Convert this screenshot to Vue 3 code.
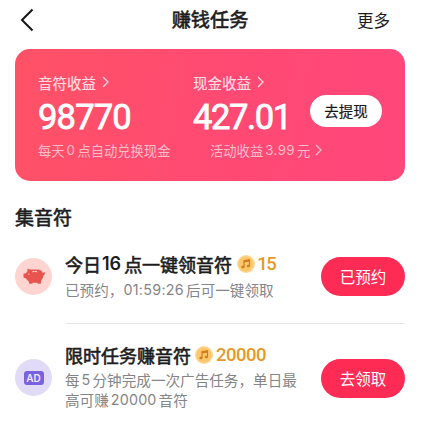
<script setup>
const balances = [
  { label: '音符收益', amount: '98770', kind: 'notes' },
  { label: '现金收益', amount: '427.01', kind: 'cash' },
]
const tasks = [
  { icon: 'pig', title: ['今日', '16', '点一键领音符'], reward: '15', lines: [['已预约，', '01:59:26', '后可一键领取']], action: '已预约' },
  { icon: 'ad', title: ['限时任务赚音符'], reward: '20000', lines: [['每', '5', '分钟完成一次广告任务，单日最'], ['高可赚', '20000', '音符']], action: '去领取' },
]
const isNumber = (s) => /^[\d:.]+$/.test(s)
</script>

<template>
  <main class="page">
    <header class="bar">
      <svg class="back" viewBox="0 0 14 24"><path d="M12.500 1.500 2 12l10.500 10.500" /></svg>
      <h1>赚钱任务</h1>
      <span class="more">更多</span>
    </header>

    <section class="wallet">
      <div v-for="b in balances" :key="b.kind" class="balance" :class="b.kind">
        <div class="label">{{ b.label }}<svg class="chev" viewBox="0 0 7 12"><path d="M1 1l5 5-5 5" /></svg></div>
        <div class="amount">{{ b.amount }}</div>
        <div v-if="b.kind === 'notes'" class="note">每天<span class="num">0</span>点自动兑换现金</div>
        <div v-else class="note">活动收益<span class="num">3.99</span>元<svg class="chev" viewBox="0 0 7 12"><path d="M1 1l5 5-5 5" /></svg></div>
      </div>
      <button class="withdraw">去提现</button>
    </section>

    <h2>集音符</h2>

    <section class="tasks">
      <article v-for="t in tasks" :key="t.icon" class="task" :class="t.icon">
        <div class="badge">
          <svg v-if="t.icon === 'pig'" class="piggy" viewBox="0 0 22 17">
            <path d="M4.600 .6 7 1.500H15Q18.800 2 19.600 4.800L21.800 4.300V6.300L20.400 7.500Q20 10.800 18.300 12.500L17.700 15.800H14.800L14.300 14.700H9.800L9.300 15.800H6.400L5.600 13.200Q4 12.200 3 10.600L.5 9.500V5.800L2.800 5.200 4.300 3.400Z" />
            <path class="slot" d="M9.200 3.800Q11.500 2.800 14.200 3.800" />
            <circle class="eye" cx="5.800" cy="6.300" r=".8" />
          </svg>
          <span v-else class="tag">AD</span>
        </div>
        <div class="info">
          <h3>
            <span v-for="(p, i) in t.title" :key="i" :class="{ num: isNumber(p) }">{{ p }}</span>
            <svg class="coin" viewBox="0 0 18 18">
              <circle cx="9" cy="9" r="9" fill="#ffd793" />
              <circle cx="9" cy="9" r="7.500" fill="#fbc66c" />
              <path d="M7 11.800V5.800L12.500 4.700V10.800M7 7L12.500 5.900" fill="none" stroke="#d07c18" stroke-width="1.200" />
              <ellipse cx="5.900" cy="12" rx="1.600" ry="1.300" fill="#d07c18" />
              <ellipse cx="11.400" cy="11" rx="1.600" ry="1.300" fill="#d07c18" />
            </svg>
            <span class="reward">{{ t.reward }}</span>
          </h3>
          <p v-for="(l, j) in t.lines" :key="j">
            <span v-for="(p, i) in l" :key="i" :class="{ num: isNumber(p) }">{{ p }}</span>
          </p>
        </div>
        <button class="action">{{ t.action }}</button>
      </article>
    </section>
  </main>
</template>

<style>
body { background: #fff; overflow: hidden; }
</style>

<style scoped>
.page {
  box-sizing: border-box;
  width: 427px;
  height: 423px;
  overflow: hidden;
  padding: 0 22px 0 15px;
  font-family: "Noto Sans CJK SC", sans-serif;
  color: #1c1c20;
  white-space: nowrap;
}
h1, h2, h3, p { margin: 0; }
button { border: 0; padding: 0; font-family: inherit; flex: none; }
.num { font-family: Inter, sans-serif; }
.bar {
  display: grid;
  grid-template-columns: 1fr auto 1fr;
  align-items: center;
  height: 39px;
  margin-bottom: 10px;
}
.back { width: 14px; height: 24px; margin-left: 5px; fill: none; stroke: #161616; stroke-width: 2; }
h1 { font-size: 19.2px; font-weight: 400; line-height: 39px; -webkit-text-stroke: .6px; }
.more { justify-self: end; margin-right: 15px; font-size: 16.5px; }
.wallet {
  box-sizing: border-box;
  display: flex;
  height: 132px;
  padding: 23px 23px 0;
  border-radius: 15px;
  background: linear-gradient(100deg, #ff5266 0%, #ff4a72 50%, #ff477c 100%);
  color: #fff;
}
.balance { width: 155px; flex: none; }
.balance.cash { width: 117px; }
.label {
  display: flex;
  align-items: center;
  height: 20px;
  font-size: 14.5px;
  font-weight: 400;
  -webkit-text-stroke: .2px;
  color: #ffdce1;
}
.chev { flex: none; width: 7px; height: 12px; margin-left: 6px; fill: none; stroke: currentColor; stroke-width: 1.3; }
.amount { height: 48px; line-height: 50px; font-family: Roboto, sans-serif; font-size: 34.500px; font-weight: 400; letter-spacing: -.8px; -webkit-text-stroke: .8px; }
.cash .amount { letter-spacing: -1.4px; }
.note { display: flex; align-items: center; height: 20px; font-size: 13.3px; color: #ffbdc9; }
.cash .note { margin-left: 17px; }
.note .num { margin: 0 2px; letter-spacing: .4px; }
.cash .note .chev { margin-left: 5px; }
.withdraw {
  width: 72px;
  height: 32px;
  margin-top: 23px;
  padding-bottom: 1px;
  border-radius: 16px;
  background: #fff;
  color: #17171a;
  font-size: 14.5px;
  font-weight: 400;
  -webkit-text-stroke: .2px;
}
h2 { margin-top: 21px; font-size: 19px; line-height: 29px; font-weight: 400; -webkit-text-stroke: .6px; }
.task { display: flex; align-items: flex-start; }
.badge {
  display: flex;
  align-items: center;
  justify-content: center;
  flex: none;
  width: 37px;
  height: 37px;
  margin-right: 13px;
  border-radius: 50%;
}
.pig .badge { margin-top: 27px; background: #ffd4d1; }
.ad .badge { margin-top: 36px; background: #e1dbf7; }
.piggy { width: 22px; height: 17px; margin-top: -1px; fill: #e9544f; }
.slot { fill: none; stroke: #ffd4d1; stroke-width: 1; }
.eye { fill: #ffaaa4; }
.tag {
  width: 20px;
  height: 14px;
  border-radius: 3px;
  background: #7a62df;
  color: #eee9ff;
  font: 600 10px/14px Inter, sans-serif;
  text-align: center;
}
.info { flex: 1; box-sizing: border-box; }
.pig .info { padding-top: 19px; }
.task.pig { height: 92px; position: relative; }
.task.pig::after {
  content: "";
  position: absolute;
  right: 0;
  bottom: -1px;
  left: 51px;
  height: 1px;
  background: #e6e6e8;
}
.ad .info { padding-top: 18px; }
h3 { display: flex; align-items: center; height: 27px; font-size: 18px; font-weight: 400; -webkit-text-stroke: .6px; }
h3 .num { margin: 0 3px 0 1px; font-size: 18px; font-weight: 600; -webkit-text-stroke: 0; }
.coin { flex: none; width: 18px; height: 18px; margin: 0 3px 0 4px; -webkit-text-stroke: 0; }
.pig .coin { margin: 0 2px 0 5px; }
.reward { color: #e59a28; font-family: Roboto, sans-serif; font-size: 18.500px; font-weight: 500; letter-spacing: -.5px; -webkit-text-stroke: 0; }
.pig .reward { letter-spacing: -1.5px; }
p { display: flex; align-items: center; height: 20.500px; font-size: 14.6px; color: #858588; }
p .num { margin: 0 2px; font-size: 14.3px; letter-spacing: .2px; }
.pig p { height: 25px; }
.pig p .num { margin-left: 0; letter-spacing: .3px; }
.action {
  width: 84px;
  height: 39px;
  padding-bottom: 1px;
  border-radius: 20px;
  background: #fe2c55;
  color: #fff;
  font-size: 15.500px;
}
.pig .action { margin-top: 26px; }
.ad .action { margin-top: 36px; }
.ad h3 + p { margin-top: 1px; }
</style>
